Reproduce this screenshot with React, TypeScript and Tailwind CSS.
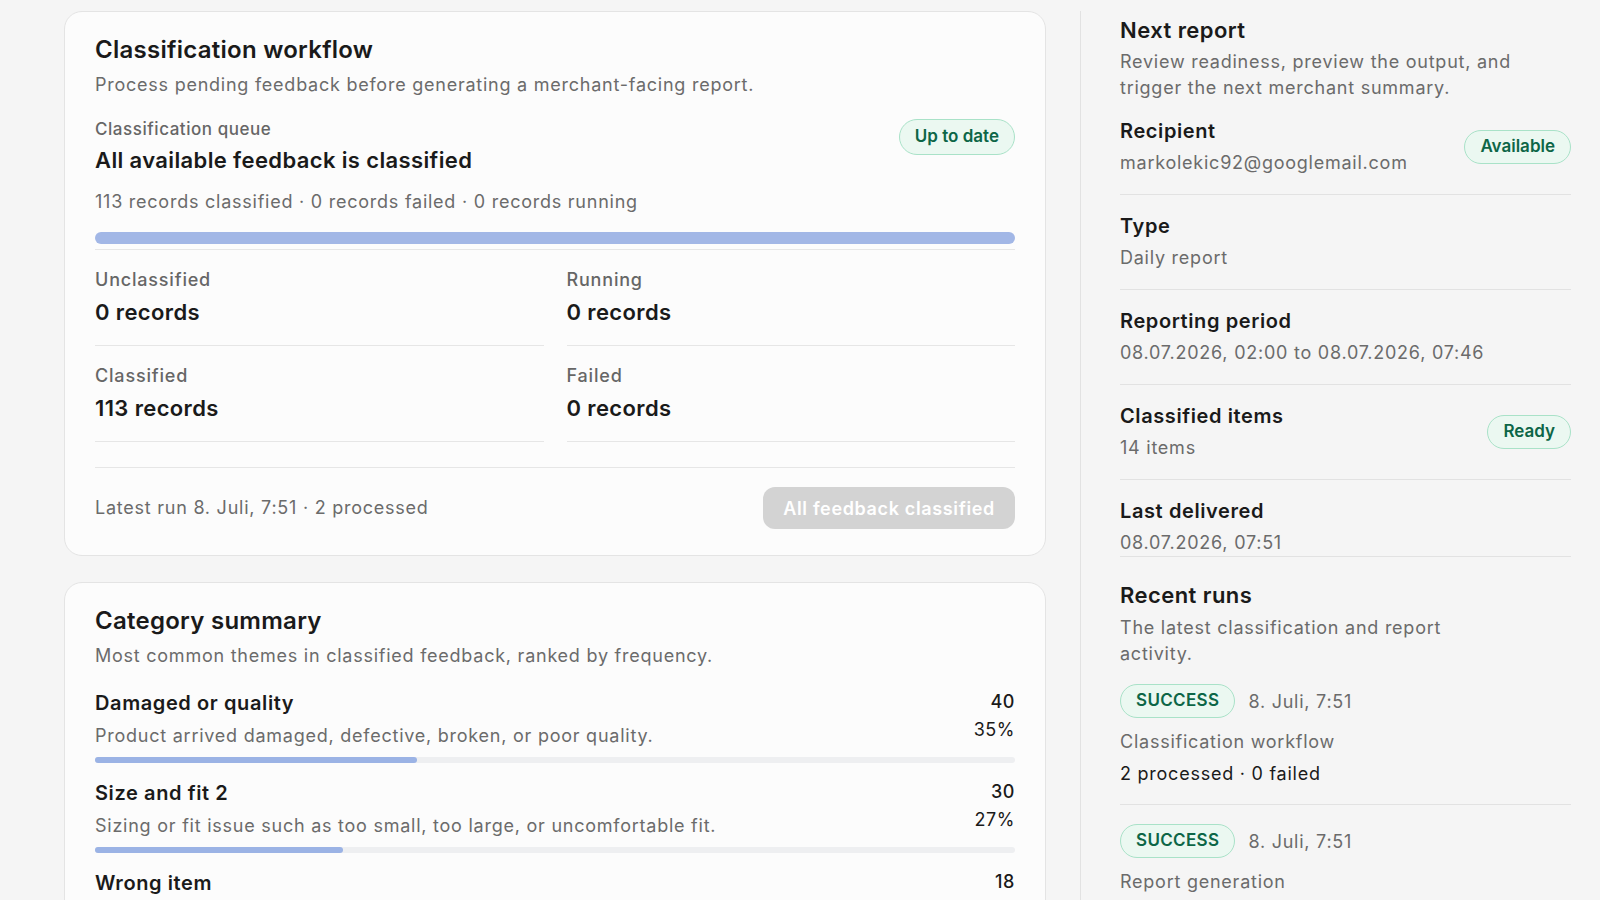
import { ReactNode } from 'react';

// shared text styles
const muted = 'text-[18px] leading-[26px] tracking-[0.042em] text-[#6b6b6b]';
const cardTitle = 'text-[24px] leading-[32px] font-semibold tracking-[0.011em] text-[#1a1a1a]';
const value = 'text-[22px] leading-[30px] font-semibold tracking-[0.017em] text-[#1a1a1a]';
const itemLabel = 'text-[20px] leading-[26px] font-semibold tracking-[0.03em] text-[#1a1a1a]';
const sideTitle = 'text-[22px] leading-[28px] font-semibold tracking-[0.02em] text-[#1a1a1a]';

const Badge = ({ children, className = '' }: { children: ReactNode; className?: string }) => (
  <span
    className={`inline-flex h-[34px] shrink-0 items-center rounded-full border border-[#a9e2c8] bg-[#ebf8f1] px-[15px] text-[17px] font-semibold text-[#0d6647] ${className}`}
  >
    {children}
  </span>
);

const stats = [
  { label: 'Unclassified', value: '0 records' },
  { label: 'Running', value: '0 records' },
  { label: 'Classified', value: '113 records' },
  { label: 'Failed', value: '0 records' },
];

const categories = [
  {
    name: 'Damaged or quality',
    desc: 'Product arrived damaged, defective, broken, or poor quality.',
    count: 40,
    pct: 35,
  },
  {
    name: 'Size and fit 2',
    desc: 'Sizing or fit issue such as too small, too large, or uncomfortable fit.',
    count: 30,
    pct: 27,
  },
  {
    name: 'Wrong item',
    desc: 'Customer received a different product, color, or variant than ordered.',
    count: 18,
    pct: 16,
  },
];

const details = [
  { label: 'Recipient', value: 'markolekic92@googlemail.com', badge: 'Available' },
  { label: 'Type', value: 'Daily report' },
  { label: 'Reporting period', value: '08.07.2026, 02:00 to 08.07.2026, 07:46' },
  { label: 'Classified items', value: '14 items', badge: 'Ready' },
];

const runs = [
  { name: 'Classification workflow', meta: '2 processed · 0 failed' },
  { name: 'Report generation', meta: '14 items · delivered' },
];

function WorkflowCard() {
  return (
    <section className="rounded-[18px] border border-[#e4e4e4] bg-[#fcfcfc] px-[30px] pt-[22px] pb-[26px]">
      <h2 className={cardTitle}>Classification workflow</h2>
      <p className={`mt-[6px] ${muted}`}>
        Process pending feedback before generating a merchant-facing report.
      </p>

      <div className="mt-[20px] flex items-start justify-between">
        <div>
          <p className="text-[17px] leading-[22px] font-medium tracking-[0.032em] text-[#666]">Classification queue</p>
          <p className={`mt-[5px] ${value}`}>All available feedback is classified</p>
        </div>
        <Badge className="mt-[1px] h-[36px]">Up to date</Badge>
      </div>

      <p className={`mt-[14px] ${muted}`}>113 records classified · 0 records failed · 0 records running</p>
      <div className="mt-[17px] h-[12px] rounded-full bg-[#a2b7e6]" />

      <div className="mt-[5px] grid grid-cols-2 gap-x-[23px] border-t border-[#e6e6e6]">
        {stats.map((s) => (
          <div key={s.label} className="border-b border-[#e6e6e6] pt-[18px] pb-[18px]">
            <p className="text-[18px] leading-[24px] font-medium tracking-[0.045em] text-[#666]">{s.label}</p>
            <p className={`mt-[5px] ${value}`}>{s.value}</p>
          </div>
        ))}
      </div>

      <div className="mt-[25px] flex items-center justify-between border-t border-[#e6e6e6] pt-[19px]">
        <p className={muted}>Latest run 8. Juli, 7:51 · 2 processed</p>
        <button className="h-[42px] rounded-[12px] bg-[#d3d3d3] px-[20px] text-[18px] font-semibold tracking-[0.036em] text-white">
          All feedback classified
        </button>
      </div>
    </section>
  );
}

function CategoryCard() {
  return (
    <section className="rounded-[18px] border border-[#e4e4e4] bg-[#fcfcfc] px-[30px] pt-[22px] pb-[26px]">
      <h2 className={cardTitle}>Category summary</h2>
      <p className={`mt-[6px] ${muted}`}>Most common themes in classified feedback, ranked by frequency.</p>
      <div className="mt-[20px] flex flex-col gap-[16px]">
        {categories.map((c) => (
          <div key={c.name}>
            <div className="flex items-start justify-between gap-6">
              <div>
                <p className="text-[20px] leading-[28px] font-semibold tracking-[0.03em] text-[#1a1a1a]">{c.name}</p>
                <p className={`mt-[6px] ${muted}`}>{c.desc}</p>
              </div>
              <div className="text-right">
                <p className="text-[18px] leading-[26px] font-medium tracking-[0.03em] text-[#1a1a1a]">{c.count}</p>
                <p className="mt-[2px] text-[18px] leading-[26px] tracking-[0.03em] text-[#1a1a1a]">{c.pct}%</p>
              </div>
            </div>
            <div className="mt-[8px] h-[6px] rounded-full bg-[#eeeff1]">
              <div className="h-full rounded-full bg-[#9bb3e5]" style={{ width: `${c.pct}%` }} />
            </div>
          </div>
        ))}
      </div>
    </section>
  );
}

export default function App() {
  return (
    <div className="min-h-screen bg-[#f5f5f5] font-['Inter',sans-serif] text-[#1a1a1a]">
      <div className="flex h-[900px] overflow-hidden pt-[11px] pl-[64px]">
        <main className="flex w-[982px] shrink-0 flex-col gap-[26px]">
          <WorkflowCard />
          <CategoryCard />
        </main>

        <aside className="ml-[34px] flex-1 border-l border-[#e2e2e2] pt-[5px] pr-[29px] pl-[39px]">
          <h3 className={sideTitle}>Next report</h3>
          <p className={`mt-[5px] max-w-[420px] ${muted}`}>
            Review readiness, preview the output, and trigger the next merchant summary.
          </p>

          <div className="border-b border-[#e2e2e2]">
            {details.map((d, i) => (
              <div
                key={d.label}
                className={`flex items-center justify-between border-b border-[#e2e2e2] pb-[18px] ${i === 0 ? 'pt-[17px]' : 'pt-[18px]'}`}
              >
                <div>
                  <p className={itemLabel}>{d.label}</p>
                  <p className={`mt-[6px] ${muted}`}>{d.value}</p>
                </div>
                {d.badge && <Badge>{d.badge}</Badge>}
              </div>
            ))}
            <div className="pt-[18px]">
              <p className={itemLabel}>Last delivered</p>
              <p className={`mt-[6px] ${muted}`}>08.07.2026, 07:51</p>
            </div>
          </div>

          <h3 className={`mt-[24px] ${sideTitle}`}>Recent runs</h3>
          <p className={`mt-[6px] max-w-[380px] ${muted}`}>The latest classification and report activity.</p>

          <div className="mt-[17px]">
            {runs.map((r, i) => (
              <div key={r.name} className={`border-b border-[#e2e2e2] pb-[17px] ${i === 0 ? '' : 'pt-[19px]'}`}>
                <div className="flex items-center gap-[13px]">
                  <Badge className="h-[33px] tracking-[0.02em]">SUCCESS</Badge>
                  <span className="text-[18px] tracking-[0.042em] text-[#6b6b6b]">8. Juli, 7:51</span>
                </div>
                <p className={`mt-[11px] ${muted}`}>{r.name}</p>
                <p className="mt-[6px] text-[18px] leading-[26px] tracking-[0.042em] text-[#1a1a1a]">{r.meta}</p>
              </div>
            ))}
          </div>
        </aside>
      </div>
    </div>
  );
}
